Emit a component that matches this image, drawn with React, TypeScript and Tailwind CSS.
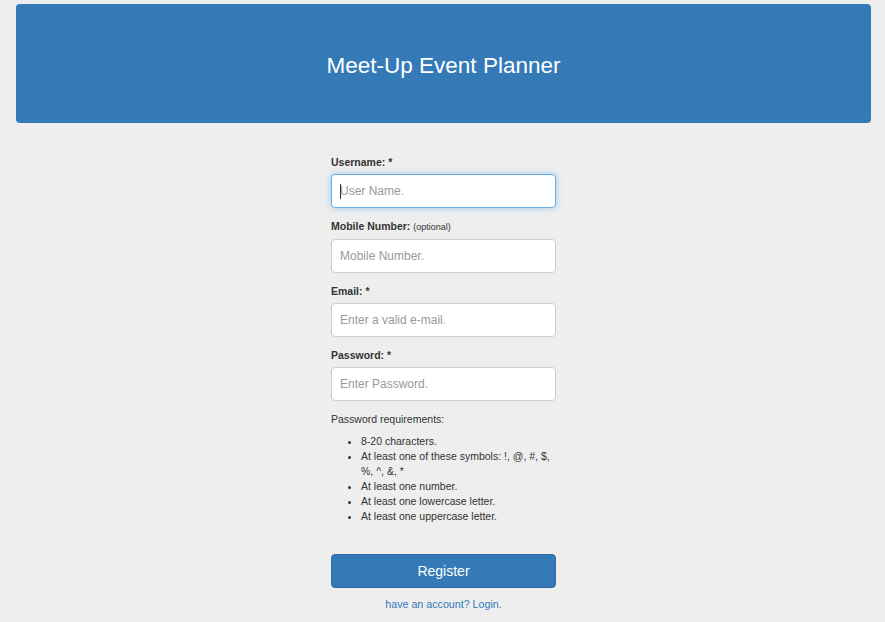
const font = { fontFamily: '"Liberation Sans", Arial, sans-serif' };

interface FieldProps {
  label: string;
  note?: string;
  placeholder: string;
  focused?: boolean;
}

const Field: React.FC<FieldProps> = ({ label, note, placeholder, focused }) => {
  return (
    <div className="mb-[11px]">
      <div className="mb-[5px] text-[10.5px] leading-[14px] font-bold text-[#333]">
        {label}
        {note ? (
          <span className="ml-[3px] text-[9px] font-normal">{note}</span>
        ) : null}
      </div>
      <div
        className={
          focused
            ? "relative h-[34px] rounded-[4px] border border-[#66afe9] bg-white shadow-[0_0_6px_rgba(102,175,233,0.6)] flex items-center pl-[8px]"
            : "relative h-[34px] rounded-[4px] border border-[#ccc] bg-white flex items-center pl-[8px]"
        }
      >
        {focused ? (
          <span className="absolute left-[8px] top-[9px] h-[15px] w-px bg-[#333]" />
        ) : null}
        <span className="text-[12px] text-[#999]">{placeholder}</span>
      </div>
    </div>
  );
};

export default function App() {
  return (
    <div className="min-h-[622px] bg-[#eeeeee] pt-[4px]" style={font}>
      <div className="ml-[16px] w-[855px]">
        <div className="h-[119px] rounded-[4px] bg-[#337ab7] flex items-center justify-center">
          <h1 className="text-[22.5px] text-white pt-[5px]">Meet-Up Event Planner</h1>
        </div>

        <div className="mx-auto mt-[32px] w-[225px]">
          <Field label="Username: *" placeholder="User Name." focused />
          <Field label="Mobile Number:" note="(optional)" placeholder="Mobile Number." />
          <Field label="Email: *" placeholder="Enter a valid e-mail." />
          <Field label="Password: *" placeholder="Enter Password." />

          <p className="text-[10.5px] leading-[14px] text-[#333] mt-[1px] mb-[8px]">
            Password requirements:
          </p>
          <ul className="list-disc pl-[30px] text-[10.5px] leading-[15px] text-[#333]">
            <li>8-20 characters.</li>
            <li>At least one of these symbols: !, @, #, $, %, ^, &amp;, *</li>
            <li>At least one number.</li>
            <li>At least one lowercase letter.</li>
            <li>At least one uppercase letter.</li>
          </ul>

          <button className="mt-[30px] h-[34px] w-full rounded-[4px] border border-[#2e6da4] bg-[#337ab7] text-[14px] text-white">
            Register
          </button>
          <div className="mt-[8px] text-center text-[10.7px] text-[#337ab7]">
            have an account? Login.
          </div>
        </div>
      </div>
    </div>
  );
}
